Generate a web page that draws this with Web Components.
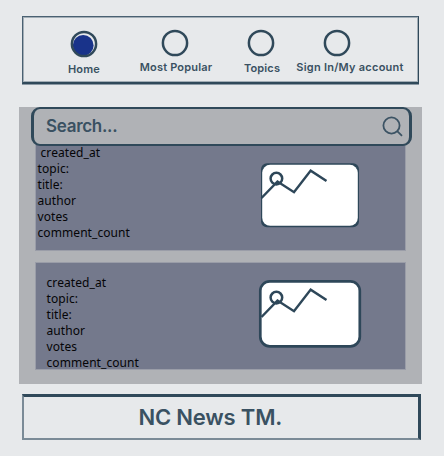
<!DOCTYPE html>
<html lang="en">
<head>
<meta charset="utf-8">
<title>NC News</title>
<style>
html,body{margin:0;height:100%;background:#e7e9eb;overflow:hidden}
body{--ink:#30495a;color:#3a5162;font-family:Inter,"Liberation Sans",sans-serif}
</style>
</head>
<body>
<news-page></news-page>
<script>
function define(name, html, setup) {
  const template = document.createElement('template');
  template.innerHTML = html;
  customElements.define(name, class extends HTMLElement {
    constructor() {
      super();
      this.attachShadow({mode: 'open'}).append(template.content.cloneNode(true));
    }
    connectedCallback() { if (setup) setup(this, this.shadowRoot); }
  });
}

define('nav-item', `
<style>
:host{display:flex;flex-direction:column;align-items:center;box-sizing:border-box;white-space:nowrap;font-weight:600;font-size:11px;line-height:14px}
svg{display:block;width:28px;height:28px;flex:none}
.dot{display:none}
:host([active]) .dot{display:block}
</style>
<svg viewBox="0 0 28 28"><circle class="dot" cx="13.2" cy="15.4" r="10.4" fill="#19338a"/><circle cx="14" cy="14" r="12.1" fill="none" stroke="#30495a" stroke-width="2.5"/></svg>
<slot></slot>`);

define('nav-bar', `
<style>
:host{display:flex;align-items:flex-start;box-sizing:border-box;width:397px;height:68px;margin-left:22px;border:1px solid #4a6172;border-bottom:2px solid var(--ink);border-right-color:var(--ink);box-shadow:0 1px #8b99a4,inset 1px 1px #a3aeb6,inset -1px 0 #a3aeb6,inset 0 -1px #a3aeb6}
nav-item:nth-of-type(1){margin:13px 0 0 43px;width:36px}
nav-item:nth-of-type(2){margin:12px 0 0 37px;width:72px}
nav-item:nth-of-type(3){margin:12px 0 0 31px;width:38px}
nav-item:nth-of-type(4){margin:11.5px 0 0 15px;width:108px}
</style>
<nav-item active><span style="margin-top:4px;letter-spacing:.2px">Home</span></nav-item>
<nav-item><span style="margin:3px 0 0 2px;letter-spacing:.18px">Most Popular</span></nav-item>
<nav-item><span style="margin:4px 0 0 2px;letter-spacing:.15px">Topics</span></nav-item>
<nav-item id="acct"><span style="margin:3.5px 0 0 2px;letter-spacing:.24px">Sign In/My account</span></nav-item>`,
(host, root) => {
  /* the account icon sits left of its label's centre */
  root.getElementById('acct').shadowRoot.querySelector('svg').style.marginRight = '24px';
});

define('search-bar', `
<style>
:host{display:flex;align-items:center;justify-content:space-between;box-sizing:border-box;width:381px;height:39px;margin-left:12px;padding:0 6px 1px 12px;border:solid var(--ink);border-width:2px 3px;border-radius:9px;background:#b0b2b6;font-weight:600;font-size:17px;line-height:20px;letter-spacing:-.3px}
svg{width:21px;height:21px;display:block}
</style>
<span>Search...</span>
<svg viewBox="0 0 21 21" fill="none" stroke="#3c5364" stroke-width="1.8"><circle cx="9.5" cy="9.5" r="8.1"/><path d="M15.2 15.2L20 19.8"/></svg>`);

define('photo-thumb', `
<style>
:host{display:block}
svg{display:block;width:104px;height:70px}
.bold{display:none}
:host([outlined]) .bold{display:block}
:host([outlined]) .thin{display:none}
</style>
<svg viewBox="0 0 104 70" fill="none" stroke="#2e4759">
<g class="thin"><rect x="3" y="3.3" width="98" height="64" rx="6" fill="#2e4759" stroke="none"/><rect x="4.2" y="4.8" width="95.6" height="61" rx="8" fill="#fff" stroke="none"/></g>
<rect class="bold" x="2.3" y="2.3" width="99.5" height="65" rx="9.5" fill="#fff" stroke-width="2.7"/>
<circle cx="18.4" cy="18.6" r="5.8" stroke-width="2.5"/>
<path d="M3.5 38L19.5 21.5L36 32.2L52.7 10.6L68.5 21" stroke-width="2.5"/>
</svg>`);

define('article-card', `
<style>
:host{display:flex;justify-content:space-between;align-items:flex-start;box-sizing:border-box;width:369px;margin-left:17px;background:#74798c;box-shadow:0 0 0 1px #9a9da8}
.fields{color:#050507;font:12px/16px "Noto Sans","Open Sans",sans-serif;letter-spacing:.08px;white-space:pre}
.fields div{height:16px}
</style>
<div class="fields"><div>created_at</div><div>topic:</div><div>title:</div><div>author</div><div>votes</div><div>comment_count</div></div>
<slot></slot>`,
(host, root) => {
  if (host.hasAttribute('indent-first')) root.querySelector('.fields div').style.paddingLeft = '3px';
});

define('news-feed', `
<style>
:host{display:block;box-sizing:border-box;width:403px;height:277px;margin:23px 0 0 19px;background:#b0b2b6}
search-bar{position:relative;z-index:1}
article-card:nth-of-type(1){height:105px;margin-top:-1px;padding:0 43px 0 1.5px}
article-card:nth-of-type(2){height:106px;margin-top:13px;padding:12px 43px 0 10.5px}
article-card:nth-of-type(1) photo-thumb{margin-top:15px}
article-card:nth-of-type(2) photo-thumb{margin-top:4px}
</style>
<search-bar></search-bar>
<article-card indent-first><photo-thumb></photo-thumb></article-card>
<article-card><photo-thumb outlined></photo-thumb></article-card>`);

define('page-footer', `
<style>
:host{display:flex;box-sizing:border-box;width:399px;height:46px;margin:10px 0 0 22px;padding:7px 0 0 114.5px;border:solid var(--ink);border-width:3px 3px 2px 2px;border-left-color:#7b8b97;border-bottom-color:#7b8b97;font-weight:600;font-size:22px;line-height:26px;letter-spacing:-.2px;white-space:nowrap}
</style>
<span>NC News TM.</span>`);

define('news-page', `
<style>:host{display:block;box-sizing:border-box;width:444px;height:456px;padding-top:16px}</style>
<nav-bar></nav-bar><news-feed></news-feed><page-footer></page-footer>`);
</script>
</body>
</html>
